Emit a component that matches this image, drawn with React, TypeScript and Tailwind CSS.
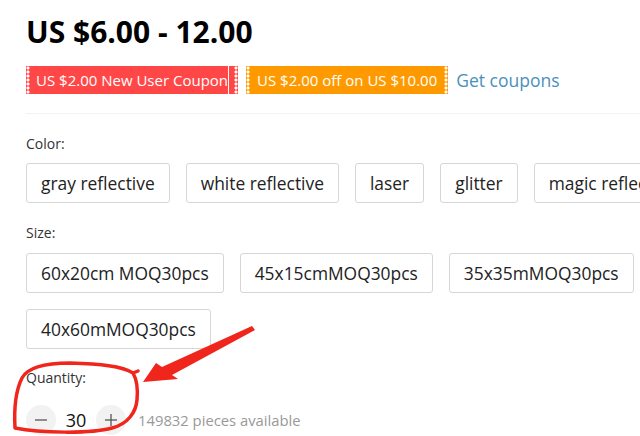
const colors = ["gray reflective", "white reflective", "laser", "glitter", "magic reflective"]
const sizes = ["60x20cm MOQ30pcs", "45x15cmMOQ30pcs", "35x35mMOQ30pcs", "40x60mMOQ30pcs"]

const dots =
  "w-[4px] self-stretch shrink-0 bg-[radial-gradient(circle,#fff_1.3px,transparent_1.8px)] bg-[length:4px_4px]"

const Option = ({ label }: { label: string }) => (
  <div className="h-[40px] shrink-0 px-[14px] flex items-center border border-[#d6d6d6] rounded-[3px] text-[17.4px] text-[#222] whitespace-nowrap">
    {label}
  </div>
)

const Annotation = () => (
  <svg className="absolute inset-0 pointer-events-none" width="640" height="436" viewBox="0 0 640 436">
    <path
      d="M133,373 C122,366 100,364 70,363 C45,363 28,367 22,378 C16,390 14,410 15,428 C40,433 90,434 112,428 C128,424 136,412 137,400 C138,390 137,380 133,373 L138,371"
      fill="none"
      stroke="#f0251b"
      strokeWidth="3.5"
      strokeLinecap="round"
      strokeLinejoin="round"
    />
    <polygon points="143,382 156,363 162,367 252,326 255,330 172,375 178,379" fill="#f0251b" />
  </svg>
)

export default function App() {
  return (
    <div className="relative w-[640px] h-[436px] overflow-hidden bg-white pl-[26px] pt-[12px] font-['Open_Sans',sans-serif] text-[#222]">
      {/* price */}
      <div className="text-[30px] leading-[40px] font-bold text-black">US $6.00 - 12.00</div>

      {/* coupons */}
      <div className="mt-[14px] flex items-center gap-2 whitespace-nowrap">
        <div className="flex h-[28px] bg-[#ff4747] text-white text-[15px]">
          <div className={dots} />
          <div className="pl-[6px] flex items-center">US $2.00 New User Coupon</div>
          <div className="w-px self-stretch bg-white" />
          <div className="w-[5px]" />
          <div className={dots} />
        </div>
        <div className="flex h-[28px] bg-[#fe9a00] text-white text-[15px]">
          <div className={dots} />
          <div className="px-[7px] flex items-center">US $2.00 off on US $10.00</div>
          <div className={dots} />
        </div>
        <span className="text-[17.5px] text-[#4a90bd]">Get coupons</span>
      </div>

      <div className="mt-[19px] h-px bg-[#f2f2f2]" />

      {/* color */}
      <div className="mt-[20px] text-[14px] leading-[20px] text-[#333]">Color:</div>
      <div className="mt-[9px] flex gap-4">
        {colors.map((c) => (
          <Option key={c} label={c} />
        ))}
      </div>

      {/* size */}
      <div className="mt-[20px] text-[14px] leading-[20px] text-[#333]">Size:</div>
      <div className="mt-[10px] flex flex-wrap gap-4">
        {sizes.map((s) => (
          <Option key={s} label={s} />
        ))}
      </div>

      {/* quantity */}
      <div className="mt-[19px] text-[14px] leading-[20px] text-[#333]">Quantity:</div>
      <div className="mt-[17px] flex items-center">
        <div className="w-[30px] h-[30px] rounded-full bg-[#f2f2f2] flex items-center justify-center">
          <svg width="12" height="12" viewBox="0 0 12 12">
            <line x1="0" y1="6" x2="12" y2="6" stroke="#555" strokeWidth="1.3" />
          </svg>
        </div>
        <div className="w-[40px] text-center text-[18px] text-[#111]">30</div>
        <div className="w-[30px] h-[30px] rounded-full bg-[#f2f2f2] flex items-center justify-center">
          <svg width="12" height="12" viewBox="0 0 12 12">
            <line x1="0" y1="6" x2="12" y2="6" stroke="#555" strokeWidth="1.3" />
            <line x1="6" y1="0" x2="6" y2="12" stroke="#555" strokeWidth="1.3" />
          </svg>
        </div>
        <div className="ml-[12px] text-[14.8px] text-[#999]">149832 pieces available</div>
      </div>

      <Annotation />
    </div>
  )
}
